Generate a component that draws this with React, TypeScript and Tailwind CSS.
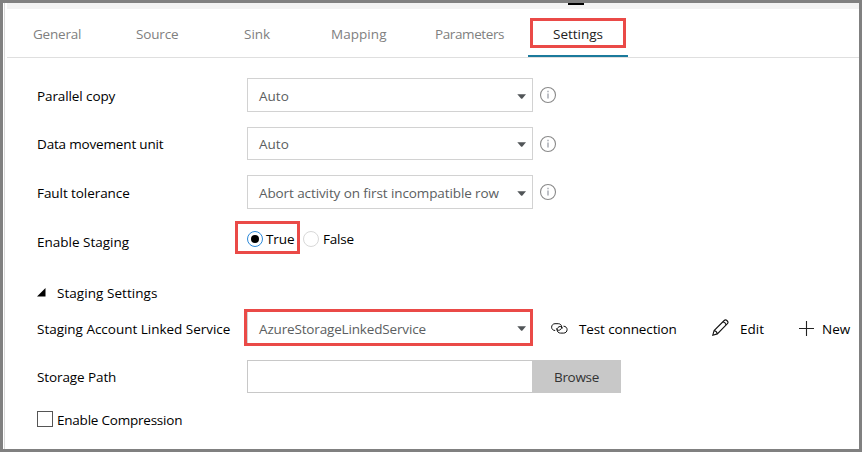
import type { ReactNode } from 'react';

const Caret = () => (
  <svg width="9" height="5" viewBox="0 0 9 5" className="mt-[2px] mr-[6px] shrink-0">
    <path d="M.3 .2h8.700L5.200 4.700H4.200z" fill="#505457" />
  </svg>
);

const Info = () => (
  <svg width="18" height="18" viewBox="0 0 18 18" className="ml-[6px] shrink-0">
    <circle cx="9" cy="9" r="7.5" fill="none" stroke="#8a8a8a" strokeWidth="1.1" />
    <path d="M9 7.6v5M9 4.8v1.4" stroke="#8a8f9a" strokeWidth="1.1" fill="none" />
  </svg>
);

const LinkIcon = () => (
  <svg width="17" height="11" viewBox="0 0 17 11" fill="none" stroke="#111" strokeWidth="1" className="mt-[2px] shrink-0">
    <path d="M4.200 7.500C2 7.500.6 6 .6 4.200.6 2.200 2.100.7 4 .7h3.300c2 0 3.400 1.500 3.400 3.300 0 1.800-1.400 3.300-3.100 3.300C6.200 7.300 5.400 6.400 5.400 5.400" />
    <path d="M12.500 3.200c2.200 0 3.600 1.600 3.600 3.400 0 2-1.500 3.500-3.400 3.500H9.500c-2 0-3.400-1.500-3.400-3.300 0-1.800 1.400-3.300 3.100-3.300 1.400 0 2.200.9 2.200 1.900" />
  </svg>
);

const PencilIcon = () => (
  <svg width="17" height="17" viewBox="0 0 17 17" fill="none" stroke="#111" strokeWidth="1.1" className="mb-px shrink-0">
    <path d="M.8 16.200l1.300-4.600L12.200 1.500c1.700-1.700 5 1.300 3.200 3.200L5.300 14.900z" />
    <path d="M2.100 11.600c1.600.2 2.900 1.500 3.200 3.300M10.900 2.800c1.500.3 2.900 1.600 3.200 3.200" />
  </svg>
);

function Select({ value, className }: { value: ReactNode; className: string }) {
  return (
    <div className={`flex w-[286px] shrink-0 items-center justify-between border border-[#d2d2d2] pl-[11px] text-[#5b5e61] ${className}`}>
      {value}
      <Caret />
    </div>
  );
}

const tabs = [
  { name: 'General', style: 'ml-[26px] w-[103px] tracking-[-0.2px]' },
  { name: 'Source', style: 'w-[108px] tracking-[-0.15px]' },
  { name: 'Sink', style: 'w-[87px]' },
  { name: 'Mapping', style: 'w-[104px] tracking-[0.05px]' },
  { name: 'Parameters', style: 'w-[93px] tracking-[-0.4px]' },
];

export default function App() {
  return (
    <div className="h-[452px] w-[862px] overflow-hidden border-[3px] border-[#808080] bg-white font-['Open_Sans','Noto_Sans',sans-serif] text-[13.5px] leading-[20px] whitespace-nowrap text-black">
      <div className="ml-px h-full border-l border-[#d9d9d9] pl-[2px]">
        <div className="h-[6px] bg-[#f2f2f2]">
          <div className="ml-[561px] h-[2px] w-4 bg-black" />
        </div>
        <nav className="flex h-[49px] border-b border-[#dfdfdf] text-[#808080]">
          {tabs.map((t) => (
            <div key={t.name} className={`shrink-0 pt-[15px] ${t.style}`}>{t.name}</div>
          ))}
          <div className="h-[48px] w-[100px] shrink-0 border-b-2 border-[#1b7a9c] pt-[9px] pl-[2px] text-[#222]">
            <div className="h-[30px] w-[96px] border-[3px] border-[#ea4a47] pt-[3px] pl-[20px]">Settings</div>
          </div>
        </nav>

        <main className="pl-[30px]">
          <div className="mt-[20px] flex h-[34px] items-center">
            <span className="w-[210px] pt-[1px] tracking-[-0.1px]">Parallel copy</span>
            <Select className="h-[34px]" value={<span className="pt-[1px]">Auto</span>} />
            <Info />
          </div>
          <div className="mt-[15px] flex h-[33px] items-center">
            <span className="w-[210px] tracking-[-0.17px]">Data movement unit</span>
            <Select className="h-[33px]" value={<span>Auto</span>} />
            <Info />
          </div>
          <div className="mt-[15px] flex h-[34px] items-center">
            <span className="w-[210px] pt-[1px] tracking-[-0.07px]">Fault tolerance</span>
            <Select className="h-[34px]" value={<span className="pt-[1px] tracking-[-0.1px]">Abort activity on first incompatible row</span>} />
            <Info />
          </div>
          <div className="mt-[12px] flex h-[33px]">
            <span className="w-[198px] pt-[11px]">Enable Staging</span>
            <div className="flex h-[33px] w-[65px] items-center border-[3px] border-[#ea4a47] pl-[9px]">
              <span className="mt-[3px] flex size-4 shrink-0 items-center justify-center rounded-full border border-[#2b88d8]">
                <span className="size-[8px] rounded-full bg-black" />
              </span>
              <span className="pt-[3px] pl-[3px] tracking-[-0.1px]">True</span>
            </div>
            <span className="mt-[10px] ml-[3px] size-4 rounded-full border border-[#d8d8d8]" />
            <span className="pt-[8px] pl-1 tracking-[-0.2px]">False</span>
          </div>
          <div className="mt-[29px] flex h-[20px] items-center">
            <svg width="9" height="9" viewBox="0 0 9 9" className="mb-[2px]"><path d="M8.500 0v8.500H0z" /></svg>
            <span className="pl-[11px] tracking-[0.05px]">Staging Settings</span>
          </div>
          <div className="mt-[6px] flex h-[37px] items-center">
            <span className="w-[207px] shrink-0 pt-[3px] tracking-[-0.02px]">Staging Account Linked Service</span>
            <div className="flex h-[37px] w-[289px] shrink-0 items-center border-[3px] border-[#ea4a47]">
              <div className="flex h-full w-full items-center justify-between border-l border-[#d2d2d2] pl-[11px] text-[#5b5e61]">
                <span className="pt-[3px] tracking-[-0.16px]">AzureStorageLinkedService</span>
                <span className="-mr-[2px]"><Caret /></span>
              </div>
            </div>
            <span className="ml-[18px]"><LinkIcon /></span>
            <span className="w-[144px] shrink-0 pt-[3px] pl-[11px] tracking-[-0.12px]">Test connection</span>
            <PencilIcon />
            <span className="w-[70px] shrink-0 pt-[3px] pl-[11px]">Edit</span>
            <svg width="15" height="15" viewBox="0 0 15 15" className="mt-px shrink-0" stroke="#222" strokeWidth="1.1"><path d="M7.500 0v15M0 7.500h15" /></svg>
            <span className="pt-[3px] pl-[8px]">New</span>
          </div>
          <div className="mt-[14px] flex h-[33px] items-center">
            <span className="w-[210px] pt-px tracking-[-0.1px]">Storage Path</span>
            <div className="h-[33px] w-[285px] border border-r-0 border-[#c8c8c8]" />
            <button className="h-[33px] w-[89px] bg-[#c8c8c8] pt-px text-[#333] tracking-[-0.3px]">Browse</button>
          </div>
          <div className="mt-[18px] flex h-4 items-center">
            <span className="size-4 border border-[#555]" />
            <span className="pt-px pl-1 tracking-[-0.22px]">Enable Compression</span>
          </div>
        </main>
      </div>
    </div>
  );
}
